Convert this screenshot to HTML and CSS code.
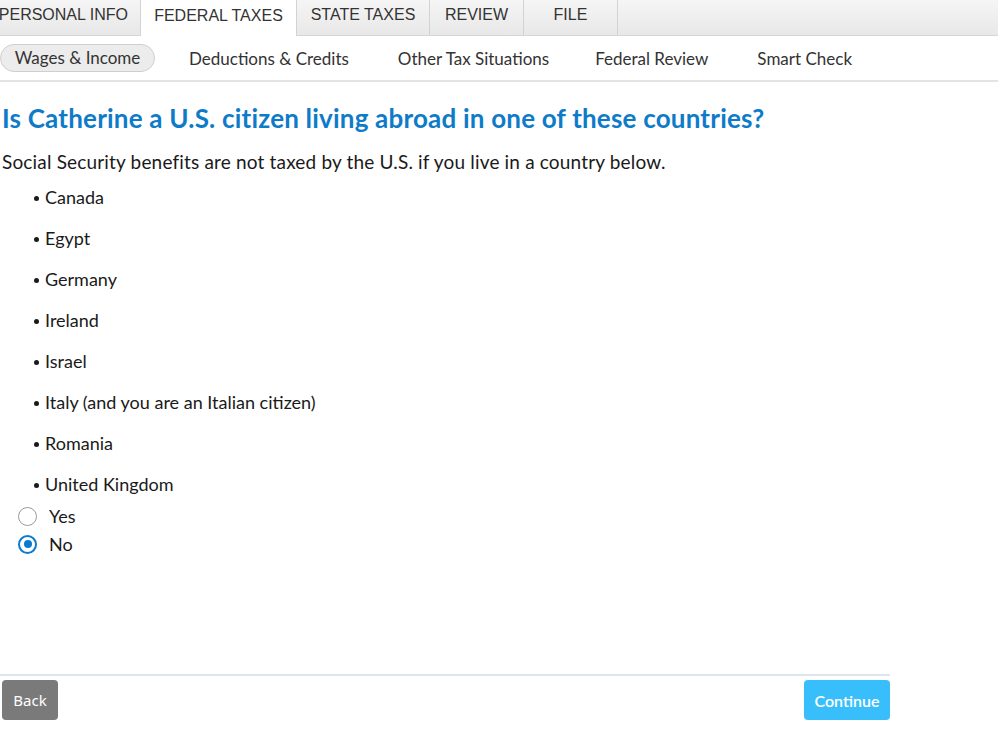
FILE: index.html
```html
<!DOCTYPE html>
<html>
<head>
<meta charset="utf-8">
<link rel="stylesheet" href="styles.css">
</head>
<body>
<nav class="tabs">
  <div class="tab tab-first">PERSONAL INFO</div>
  <div class="tab tab-active">FEDERAL TAXES</div>
  <div class="tab tab-state">STATE TAXES</div>
  <div class="tab tab-review">REVIEW</div>
  <div class="tab tab-file">FILE</div>
</nav>
<nav class="subnav">
  <div class="sub sub-active">Wages &amp; Income</div>
  <div class="sub sub-deductions">Deductions &amp; Credits</div>
  <div class="sub sub-other">Other Tax Situations</div>
  <div class="sub sub-review">Federal Review</div>
  <div class="sub">Smart Check</div>
</nav>
<main class="content">
  <h1 class="title">Is Catherine a U.S. citizen living abroad in one of these countries?</h1>
  <p class="lead">Social Security benefits are not taxed by the U.S. if you live in a country below.</p>
  <ul class="countries">
    <li>Canada</li>
    <li>Egypt</li>
    <li>Germany</li>
    <li>Ireland</li>
    <li>Israel</li>
    <li>Italy (and you are an Italian citizen)</li>
    <li>Romania</li>
    <li>United Kingdom</li>
  </ul>
  <div class="radios">
    <label class="radio"><span class="circle"></span><span>Yes</span></label>
    <label class="radio"><span class="circle checked"></span><span>No</span></label>
  </div>
</main>
<footer class="footer">
  <button class="btn btn-back">Back</button>
  <button class="btn btn-continue">Continue</button>
</footer>
</body>
</html>
```
FILE: styles.css
```css
* { box-sizing: border-box; }
html, body { margin: 0; padding: 0; background: #fff; }
body { width: 998px; height: 741px; overflow: hidden; font-family: Lato, "Noto Sans", sans-serif; color: #1a1a1a; }

.tabs {
  display: flex;
  height: 36px;
  background: linear-gradient(#f5f5f5, #e8e8e8);
  border-bottom: 1px solid #d6d6d6;
  font-family: "Liberation Sans", Arial, sans-serif;
  font-size: 16px;
  color: #333;
}
.tab {
  display: flex;
  align-items: center;
  justify-content: center;
  height: 35px;
  padding: 0 8px 5px;
  border-right: 1px solid #d3d3d3;
  white-space: nowrap;
}
.tab-first { justify-content: flex-end; width: 141px; padding-right: 12px; }
.tab-active { background: #fff; width: 157px; height: 36px; border-left: 1px solid #d3d3d3; margin-left: -1px; }
.tab-state { width: 133px; }
.tab-review { width: 94px; }
.tab-file { width: 94px; }

.subnav {
  display: flex;
  align-items: center;
  height: 46px;
  border-bottom: 2px solid #e3e3e3;
  font-size: 17px;
  color: #333;
}
.sub { white-space: nowrap; margin-right: 49px; }
.sub-active {
  background: #ececec;
  border: 1px solid #cfcfcf;
  border-radius: 14px;
  height: 28px;
  line-height: 26px;
  width: 155px;
  text-align: center;
  margin-right: 34px;
}
.sub-other { margin-right: 46px; }

.content { padding: 21px 0 0 2px; height: 592px; }
.title {
  margin: 0;
  font-size: 26px;
  letter-spacing: 0.2px;
  font-weight: 700;
  color: #0e7bc9;
  line-height: 30px;
}
.lead { margin: 17px 0 0; font-size: 19px; letter-spacing: 0.17px; line-height: 24px; }
.countries { margin: 11px 0 0; padding: 0 0 0 43px; font-size: 18px; list-style: none; }
.countries li { line-height: 24px; margin-bottom: 17px; position: relative; }
.countries li::before {
  content: "";
  position: absolute;
  left: -11px;
  top: 11px;
  width: 5px;
  height: 5px;
  border-radius: 50%;
  background: #1a1a1a;
}
.radios { margin-top: -9px; display: flex; flex-direction: column; gap: 4px; }
.radio { display: flex; align-items: center; gap: 12px; font-size: 18px; padding-left: 16px; height: 24px; }
.circle {
  width: 19px; height: 19px; border-radius: 50%;
  border: 1px solid #9a9a9a; background: #fff; display: inline-block; position: relative;
}
.circle.checked { border: 2px solid #0a7bd0; }
.circle.checked::after {
  content: ""; position: absolute; left: 3.5px; top: 3.5px; width: 8px; height: 8px; border-radius: 50%; background: #0a7bd0;
}

.footer {
  width: 890px;
  border-top: 2px solid #dfe5ee;
  display: flex;
  justify-content: space-between;
  padding: 4px 0 0 2px;
}
.btn {
  height: 40px;
  border: none;
  border-radius: 4px;
  color: #fff;
  font-family: "Noto Sans", sans-serif;
  font-size: 15px;
  padding: 0;
}
.btn-back { width: 56px; background: #7a7a7a; }
.btn-continue { width: 86px; background: #38bffb; font-family: Lato, sans-serif; font-size: 16px; font-weight: 600; }
```
